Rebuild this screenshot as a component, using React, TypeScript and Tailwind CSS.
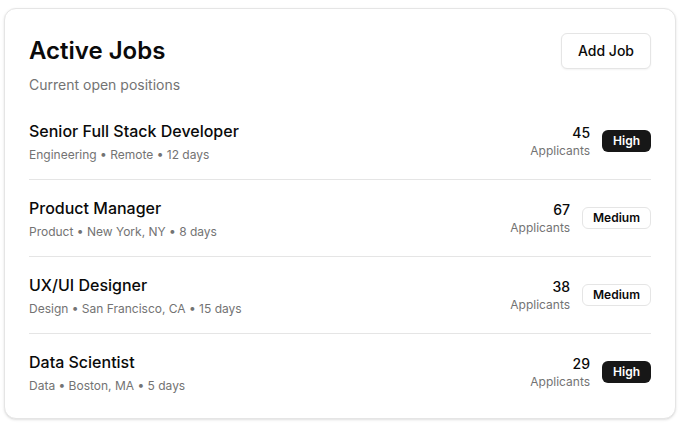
const jobs = [
  { title: "Senior Full Stack Developer", meta: "Engineering • Remote • 12 days", applicants: 45, priority: "High" },
  { title: "Product Manager", meta: "Product • New York, NY • 8 days", applicants: 67, priority: "Medium" },
  { title: "UX/UI Designer", meta: "Design • San Francisco, CA • 15 days", applicants: 38, priority: "Medium" },
  { title: "Data Scientist", meta: "Data • Boston, MA • 5 days", applicants: 29, priority: "High" },
];

function PriorityBadge({ level }: { level: string }) {
  if (level === "High") {
    return (
      <span className="inline-flex items-center rounded-md bg-[#171717] px-[11px] py-[3px] text-xs font-semibold text-white">
        {level}
      </span>
    );
  }
  return (
    <span className="inline-flex items-center rounded-md border border-[#e5e5e5] px-2.5 py-[2px] text-xs font-semibold text-[#0a0a0a]">
      {level}
    </span>
  );
}

export default function App() {
  return (
    <div className="min-h-screen bg-white pl-1 pt-2 font-['Inter',sans-serif] text-[#0a0a0a]">
      <div className="w-[672px] rounded-xl border border-[#e5e5e5] bg-white px-6 py-6 shadow-sm">
        <div className="flex items-start justify-between">
          <div>
            <h2 className="pt-0.5 text-2xl font-semibold">Active Jobs</h2>
            <p className="mt-2 text-sm text-[#737373]">Current open positions</p>
          </div>
          <button className="h-9 rounded-md border border-[#e5e5e5] bg-white px-4 text-sm font-medium shadow-xs">
            Add Job
          </button>
        </div>

        <div className="mt-6 space-y-4">
          {jobs.map((job, i) => (
            <div
              key={job.title}
              className={
                i < jobs.length - 1
                  ? "flex items-center justify-between border-b border-[#e5e5e5] pb-4"
                  : "flex items-center justify-between"
              }
            >
              <div>
                <h3 className="text-base font-medium">{job.title}</h3>
                <p className="mt-1 text-xs text-[#737373]">{job.meta}</p>
              </div>
              <div className="flex items-center gap-3">
                <div className="text-right">
                  <p className="text-sm font-medium">{job.applicants}</p>
                  <p className="text-xs text-[#737373]">Applicants</p>
                </div>
                <PriorityBadge level={job.priority} />
              </div>
            </div>
          ))}
        </div>
      </div>
    </div>
  );
}
